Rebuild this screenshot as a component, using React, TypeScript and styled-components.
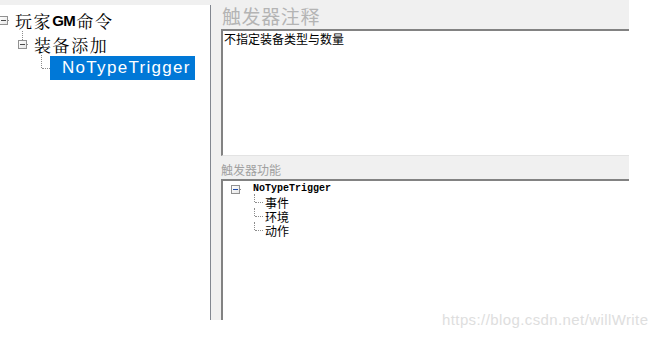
import React from 'react'
import styled, { createGlobalStyle } from 'styled-components'

/* ------------------------ global ------------------------ */
const Global = createGlobalStyle`
  html, body { margin: 0; padding: 0; background: #fff; }
  body { font-family: "Noto Sans CJK SC", "Liberation Sans", sans-serif; }
`

/* ------------------------ styled ------------------------ */
const Page = styled.div`
  position: relative;
  width: 656px;
  height: 338px;
  overflow: hidden;
  background: #fff;
`
const Window = styled.div`
  width: 629px;
  height: 320px;
  background: #f0f0f0;
  display: grid;
  grid-template-columns: 211px 10px 1fr;
`
const LeftPanel = styled.div`
  margin-top: 5px;
  padding-top: 3px;
  background: #fff;
  border-right: 1px solid #828790;
  overflow: hidden;
`
const RightPane = styled.div`
  display: flex;
  flex-direction: column;
  min-width: 0;
`
const Title = styled.div`
  height: 29px;
  padding-left: 1px;
  font-size: 19px;
  line-height: 31px;
  color: #b4b4b4;
  letter-spacing: 0.6px;
`
const NoteBox = styled.div`
  height: 123px;
  background: #fff;
  border-top: 2px solid #828282;
  border-left: 2px solid #828282;
  border-bottom: 1px solid #e3e3e3;
  padding: 1px 0 0 1px;
  font-size: 12px;
  line-height: 14px;
  color: #000;
`
const SubTitle = styled.div`
  height: 23px;
  font-size: 12px;
  line-height: 28px;
  color: #a0a0a0;
`
const TreeBox = styled.div`
  flex: 1;
  background: #fff;
  border-top: 2px solid #828282;
  border-left: 2px solid #828282;
  padding-top: 1px;
`

/* tree parts */
const Row = styled.div<{ $h: number; $pad: number }>`
  display: flex;
  align-items: center;
  height: ${p => p.$h}px;
  margin-left: ${p => p.$pad}px;
  white-space: nowrap;
`
const Cell = styled.div<{ $w: number; $up?: boolean; $right?: number }>`
  position: relative;
  flex: none;
  width: ${p => p.$w}px;
  height: 100%;
  &::before {
    content: '';
    display: ${p => (p.$up ? 'block' : 'none')};
    position: absolute;
    left: ${p => Math.floor(p.$w / 2)}px;
    top: -1px;
    height: calc(50% + 1px);
    border-left: 1px dotted #8c8c8c;
  }
  &::after {
    content: '';
    position: absolute;
    left: ${p => Math.floor(p.$w / 2) + 1}px;
    right: ${p => p.$right ?? 0}px;
    top: 50%;
    border-top: 1px dotted #8c8c8c;
  }
`
const Expand = styled.div<{ $blue?: boolean }>`
  position: absolute;
  z-index: 1;
  left: 50%;
  top: 50%;
  width: 7px;
  height: 7px;
  margin: -4px 0 0 -4px;
  border: 1px solid #919191;
  background: linear-gradient(135deg, #fff 0%, #e6e6e6 100%);
  &::after {
    content: '';
    position: absolute;
    left: 1px;
    right: 1px;
    top: 3px;
    border-top: 1px solid ${p => (p.$blue ? '#1d4aa8' : '#4a4a4a')};
  }
`
const BigLabel = styled.span<{ $selected?: boolean }>`
  display: inline-flex;
  align-items: center;
  height: 24px;
  padding: ${p => (p.$selected ? '0 4px 0 12px' : '0 3px')};
  background: ${p => (p.$selected ? '#0078d7' : 'transparent')};
  color: ${p => (p.$selected ? '#fff' : '#000')};
  font-family: ${p =>
    p.$selected
      ? '"Liberation Sans", "Noto Sans CJK SC", sans-serif'
      : '"Noto Serif CJK SC", "Noto Sans CJK SC", serif'};
  font-size: 17px;
  letter-spacing: ${p => (p.$selected ? '1.3px' : '1.6px')};
  b {
    font-family: "Liberation Sans", sans-serif;
    font-weight: 700;
    font-size: 15px;
    letter-spacing: -0.5px;
    margin-right: 1px;
  }
`
const SmallLabel = styled.span<{ $mono?: boolean }>`
  padding-left: ${p => (p.$mono ? 9 : 2)}px;
  font-family: ${p =>
    p.$mono ? '"Liberation Mono", monospace' : '"Noto Sans CJK SC", sans-serif'};
  font-weight: ${p => (p.$mono ? 700 : 400)};
  font-size: ${p => (p.$mono ? 10 : 12)}px;
  line-height: 13px;
  color: #000;
`
const Watermark = styled.div`
  position: absolute;
  left: 442px;
  top: 311px;
  font-family: "Liberation Sans", sans-serif;
  font-size: 15px;
  color: #dedede;
  letter-spacing: 0.4px;
`

export default function App() {
  const actions = ['事件', '环境', '动作']
  return (
    <Page>
      <Global />
      <Window>
        <LeftPanel>
          <Row $h={24} $pad={-6}>
            <Cell $w={18} $right={3}><Expand /></Cell>
            <BigLabel>玩家<b>GM</b>命令</BigLabel>
          </Row>
          <Row $h={24} $pad={13}>
            <Cell $w={18} $up $right={3}><Expand /></Cell>
            <BigLabel>装备添加</BigLabel>
          </Row>
          <Row $h={24} $pad={32}>
            <Cell $w={18} $up />
            <BigLabel $selected>NoTypeTrigger</BigLabel>
          </Row>
        </LeftPanel>
        <div />
        <RightPane>
          <Title>触发器注释</Title>
          <NoteBox>不指定装备类型与数量</NoteBox>
          <SubTitle>触发器功能</SubTitle>
          <TreeBox>
            <Row $h={13} $pad={3}>
              <Cell $w={18} $right={3}><Expand $blue /></Cell>
              <SmallLabel $mono>NoTypeTrigger</SmallLabel>
            </Row>
            {actions.map(a => (
              <Row key={a} $h={14} $pad={22}>
                <Cell $w={18} $up />
                <SmallLabel>{a}</SmallLabel>
              </Row>
            ))}
          </TreeBox>
        </RightPane>
      </Window>
      <Watermark>https://blog.csdn.net/willWrite</Watermark>
    </Page>
  )
}
